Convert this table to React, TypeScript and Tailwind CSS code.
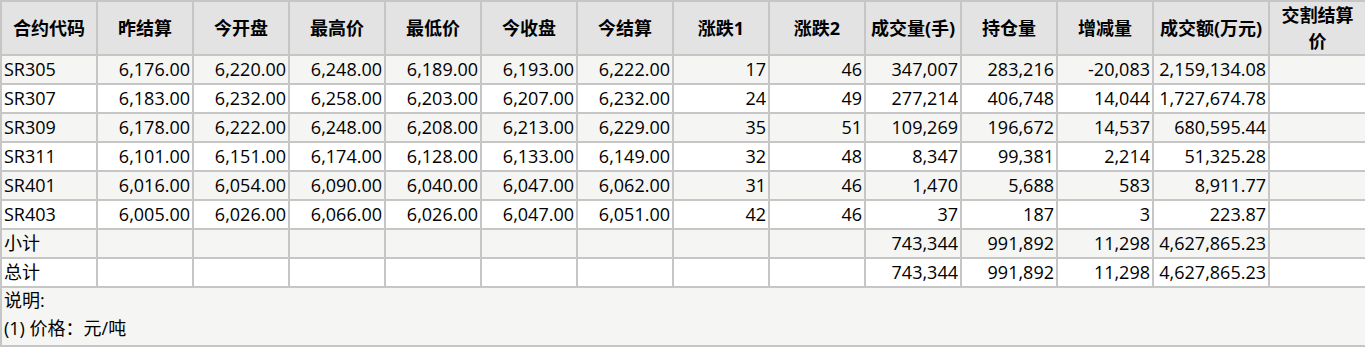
import React from 'react';

const headers = [
  '合约代码', '昨结算', '今开盘', '最高价', '最低价', '今收盘', '今结算',
  '涨跌1', '涨跌2', '成交量(手)', '持仓量', '增减量', '成交额(万元)', '交割结算价',
];

const rows: string[][] = [
  ['SR305', '6,176.00', '6,220.00', '6,248.00', '6,189.00', '6,193.00', '6,222.00', '17', '46', '347,007', '283,216', '-20,083', '2,159,134.08', ''],
  ['SR307', '6,183.00', '6,232.00', '6,258.00', '6,203.00', '6,207.00', '6,232.00', '24', '49', '277,214', '406,748', '14,044', '1,727,674.78', ''],
  ['SR309', '6,178.00', '6,222.00', '6,248.00', '6,208.00', '6,213.00', '6,229.00', '35', '51', '109,269', '196,672', '14,537', '680,595.44', ''],
  ['SR311', '6,101.00', '6,151.00', '6,174.00', '6,128.00', '6,133.00', '6,149.00', '32', '48', '8,347', '99,381', '2,214', '51,325.28', ''],
  ['SR401', '6,016.00', '6,054.00', '6,090.00', '6,040.00', '6,047.00', '6,062.00', '31', '46', '1,470', '5,688', '583', '8,911.77', ''],
  ['SR403', '6,005.00', '6,026.00', '6,066.00', '6,026.00', '6,047.00', '6,051.00', '42', '46', '37', '187', '3', '223.87', ''],
  ['小计', '', '', '', '', '', '', '', '', '743,344', '991,892', '11,298', '4,627,865.23', ''],
  ['总计', '', '', '', '', '', '', '', '', '743,344', '991,892', '11,298', '4,627,865.23', ''],
];

const widths = [96, 96, 96, 96, 96, 96, 96, 96, 96, 96, 96, 96, 116, 97];

export default function App() {
  return (
    <div className="w-[1365px] bg-white text-black font-['Open_Sans','Noto_Sans_CJK_SC',sans-serif] text-[18px]">
      <table className="w-full table-fixed border-collapse border-2 border-[#c6c6c6]">
        <colgroup>
          {widths.map((w, i) => (
            <col key={i} style={{ width: w }} />
          ))}
        </colgroup>
        <thead>
          <tr className="bg-[#e3e3e3]">
            {headers.map((h) => (
              <th key={h} className="h-[52px] border-2 border-[#c6c6c6] px-1 py-0 text-center font-bold leading-[26px]">
                {h}
              </th>
            ))}
          </tr>
        </thead>
        <tbody>
          {rows.map((r, i) => (
            <tr key={i} className={i % 2 === 0 ? 'bg-[#f5f5f3]' : 'bg-white'}>
              {r.map((c, j) => (
                <td
                  key={j}
                  className={`h-[27px] border-2 border-[#c6c6c6] py-0 leading-[27px] whitespace-nowrap ${
                    j === 0 ? 'pl-[2px] text-left' : 'pr-[2px] text-right'
                  }`}
                >
                  {c}
                </td>
              ))}
            </tr>
          ))}
          <tr className="bg-[#f5f5f3]">
            <td colSpan={14} className="h-[59px] border-2 border-[#c6c6c6] p-0 pl-[2px] align-top">
              <div className="h-[28px] leading-[24px]">说明:</div>
              <div className="h-[28px] leading-[24px]">(1) 价格：元/吨</div>
            </td>
          </tr>
        </tbody>
      </table>
    </div>
  );
}
